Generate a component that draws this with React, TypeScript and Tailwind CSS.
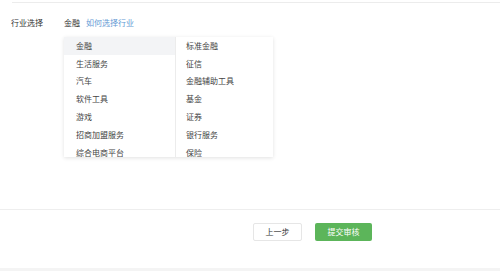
import React from 'react';

const leftItems = ['金融', '生活服务', '汽车', '软件工具', '游戏', '招商加盟服务', '综合电商平台'];
const rightItems = ['标准金融', '征信', '金融辅助工具', '基金', '证券', '银行服务', '保险'];

const App: React.FC = () => {
  return (
    <div
      className="relative w-[500px] h-[271px] overflow-hidden bg-white text-[8px] text-[#444]"
      style={{ fontFamily: '"Noto Sans CJK SC", "Noto Sans", sans-serif' }}
    >
      <div className="h-[2px]" />
      <div className="ml-[12px] border-t border-[#ececec]" />

      <div className="flex items-center pt-[12px] h-[28px]">
        <span className="w-[64px] pl-[11px] text-[#333]">行业选择</span>
        <span className="text-[#333]">金融</span>
        <span className="ml-[6px] text-[#6399d4]">如何选择行业</span>
      </div>

      <div className="ml-[64px] mt-[6px] flex w-[209px] h-[120px] overflow-hidden bg-white shadow-[0_1px_4px_rgba(0,0,0,0.12)]">
        <div className="w-[111px]">
          {leftItems.map((item, i) => (
            <div
              key={item}
              className={`h-[17.8px] flex items-center pl-[12px] ${i === 0 ? 'bg-[#f3f4f6]' : ''}`}
            >
              {item}
            </div>
          ))}
        </div>
        <div className="flex-1 border-l border-[#ececec]">
          {rightItems.map((item) => (
            <div key={item} className="h-[17.8px] flex items-center pl-[10px]">
              {item}
            </div>
          ))}
        </div>
      </div>

      <div className="mt-[52px] border-t border-[#eeeeee]" />
      <div className="flex items-start h-[58px] pl-[253px] pt-[13px]">
        <button className="w-[49px] h-[18px] border border-[#e6e6e6] bg-white text-[#333] rounded-[2px]">
          上一步
        </button>
        <button className="ml-[13px] w-[57px] h-[18px] bg-[#5cb55a] text-white rounded-[2px]">
          提交审核
        </button>
      </div>
      <div className="h-[3px] bg-[#f4f4f4]" />
    </div>
  );
};

export default App;
